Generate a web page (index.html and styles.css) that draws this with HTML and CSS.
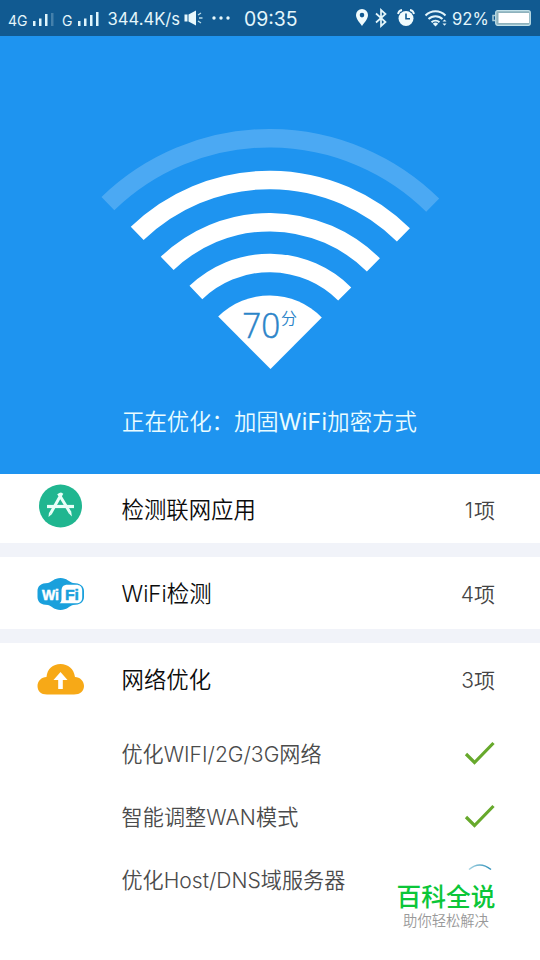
FILE: index.html
```html
<!DOCTYPE html>
<html lang="zh-CN">
<head>
<meta charset="utf-8">
<title>WiFi优化</title>
<link rel="stylesheet" href="styles.css">
</head>
<body>
<header class="status">
  <span class="net net-a">4G</span>
  <svg class="bars-a" width="23" height="16" viewBox="0 0 23 16" fill="#dff5fc"><path d="M1 9h2.500v5H1zM7 6.500h2.500V14H7zM13 2h2.500v12H13z"/><path d="M19 1h2.500v13H19z" opacity=".25"/></svg>
  <span class="net net-b">G</span>
  <svg class="bars-b" width="23" height="16" viewBox="0 0 23 16" fill="#dff5fc"><path d="M1 9h2.500v5H1zM7 6.500h2.500V14H7zM13 3h2.500v11H13zM19 0h2.500v14H19z"/></svg>
  <span class="speed">344.4K/s</span>
  <svg class="speaker" width="20" height="16" viewBox="0 0 20 16"><path d="M.5 4.500h3v7h-3zM4.500 4.500L12 .5v15l-7.500-4z" fill="#e8f8fc"/><path d="M14 5l3-2M15 8h3.500M14 11l3 2" stroke="#b9dce9" stroke-width="1.300"/></svg>
  <svg class="dots" width="20" height="6" viewBox="0 0 20 6" fill="#e8f8fc"><circle cx="3" cy="3" r="1.700"/><circle cx="10" cy="3" r="1.700"/><circle cx="17" cy="3" r="1.700"/></svg>
  <span class="time">09:35</span>
  <svg class="pin" width="14" height="20" viewBox="0 0 14 20"><path fill-rule="evenodd" d="M7 1a6 6 0 0 1 6 6c0 4-4 8-6 11-2-3-6-7-6-11a6 6 0 0 1 6-6zm0 3.800a2.300 2.300 0 1 0 0 4.600 2.300 2.300 0 0 0 0-4.600z" fill="#f0fbfd"/></svg>
  <svg class="bluetooth" width="12" height="20" viewBox="0 0 12 20"><path d="M1 5.500l9.500 8.500L6 18V2l4.500 4L1 14.500" fill="none" stroke="#e4f6fb" stroke-width="1.700"/></svg>
  <svg class="alarm" width="20" height="20" viewBox="0 0 20 20"><circle cx="10" cy="10.500" r="7.500" fill="#f0fbfd"/><path d="M2 6a5 5 0 0 1 4-4M14 2a5 5 0 0 1 4 4" fill="none" stroke="#f0fbfd" stroke-width="1.800"/><path d="M10 5.500v5.200h4" fill="none" stroke="#115a91" stroke-width="1.600"/></svg>
  <svg class="wlan" width="24" height="18" viewBox="0 0 24 18"><g fill="none" stroke="#e4f6fb" stroke-width="2"><path d="M1.500 6.500a14 14 0 0 1 20 0M4.500 10a10 10 0 0 1 14 0M7.500 13.300a6 6 0 0 1 8 0"/></g><path d="M8.800 14.700a4 4 0 0 1 5.400 0L11.500 17.500zM18.500 12.500l2-2 2 2zM18.500 14.500h4l-2 2.200z" fill="#e4f6fb"/></svg>
  <span class="percent">92%</span>
  <svg class="battery" width="40" height="18" viewBox="0 0 40 18"><path d="M3 6.500H1v5h2" fill="none" stroke="#a8cbd7" stroke-width="1.500"/><rect x="3.700" y="1.700" width="34.600" height="14.600" rx="2" fill="#8eb2bd" stroke="#c2e1e9" stroke-width="1.200"/><path d="M6.500 4h30.500v10H6.500z" fill="#fff"/></svg>
</header>

<section class="hero">
  <svg class="signal" width="340" height="244" viewBox="100 127 340 244">
    <g fill="none" stroke="#fff" stroke-width="18.500">
      <path d="M107.900 203.600a232.500 232.500 0 0 1 324.800 1.500" opacity=".2"/>
      <path d="M137.200 233.400a190.500 190.500 0 0 1 266.200 1.500"/>
      <path d="M167.200 263.400a147.500 147.500 0 0 1 206.200 1.500"/>
      <path d="M195.900 292.500a106.500 106.500 0 0 1 148.800 1.500"/>
    </g>
    <path d="M270.500 369l-52.300-52.600a73.500 73.500 0 0 1 103.600 1z" fill="#fff"/>
    <text class="score" x="242.300" y="338" textLength="38" lengthAdjust="spacingAndGlyphs">70</text>
    <text class="unit" x="281" y="323.500">分</text>
  </svg>
  <p class="progress">正在优化：加固<span>WiFi</span>加密方式</p>
</section>

<main>
  <section class="row row-apps">
    <svg class="icon" width="48" height="44" viewBox="0 0 48 44"><circle cx="24.500" cy="22" r="21.500" fill="#20b690"/><g fill="none" stroke="#e9fff8" stroke-width="3"><path d="M26 9L14.500 29.500M22.500 9.500L34 28.500"/><path d="M11 22.500h27" stroke-width="3.200"/></g><path d="M13 28.500l3 1.500-3.500 3zM32.500 29l2.700-1.600.7 5z" fill="#e9fff8"/></svg>
    <h2>检测联网应用</h2><span class="count count-one">1项</span>
  </section>
  <section class="row row-wifi">
    <svg class="icon" width="48" height="44" viewBox="0 0 48 44"><path d="M12 11c4-1 6-5 12.500-5S33 10 37 11c7 0 11 3 11 8v6c0 5-4 8-11 8-4 1-6 5-12.500 5S16 34 12 33C5 33 1.500 30 1.500 25v-6c0-5 3.500-8 10.500-8z" fill="#1aa0dc"/><path d="M31.500 12.800H40c4 0 6.200 2 6.200 6v6.400c0 4-2.200 6-6.200 6H23.500c2-1 2-3 2-6v-6.400c0-4 2-6 6-6z" fill="#fff"/><text class="logo logo-wi" x="6" y="27.500" textLength="17" lengthAdjust="spacingAndGlyphs">Wi</text><text class="logo logo-fi" x="29" y="27.500" textLength="14" lengthAdjust="spacingAndGlyphs">Fi</text></svg>
    <h2 class="h-wifi">WiFi检测</h2><span class="count">4项</span>
  </section>
  <section class="row row-net">
    <svg class="icon" width="48" height="44" viewBox="0 0 48 44"><path d="M11 36.500C5 36.500 1.500 33 1.500 28s4-9 9-9C11 11 17 6 24.500 6S38 11 39 19c5 0 9 4 9 9s-4 8.500-10 8.500z" fill="#f7a917"/><path d="M24.500 14l7 8h-4.700v9h-4.600v-9h-4.700z" fill="#fff"/></svg>
    <h2>网络优化</h2><span class="count">3项</span>
  </section>
  <ul class="tasks">
    <li><span>优化WIFI/2G/3G网络</span><svg width="32" height="26" viewBox="0 0 32 26"><path d="M2 14l8.500 8.500L29.500 3" fill="none" stroke="#67a92c" stroke-width="3.200"/></svg></li>
    <li><span class="wan">智能调整WAN模式</span><svg width="32" height="26" viewBox="0 0 32 26"><path d="M2 14l8.500 8.500L29.500 3" fill="none" stroke="#67a92c" stroke-width="3.200"/></svg></li>
    <li><span>优化Host/DNS域服务器</span><svg width="32" height="32" viewBox="0 0 32 32"><defs><linearGradient id="spin"><stop stop-color="#a5d3e2"/><stop offset="1" stop-color="#2b8eb7"/></linearGradient></defs><path d="M5 6.500Q15.500-2.500 27 6.500" fill="none" stroke="url(#spin)" stroke-width="1.500"/></svg></li>
  </ul>
</main>
<aside class="brand"><strong>百科全说</strong><span>助你轻松解决</span></aside>
</body>
</html>
```
FILE: styles.css
```css
* { box-sizing: border-box; }
body {
  margin: 0;
  width: 540px;
  height: 960px;
  overflow: hidden;
  position: relative;
  background: #fff;
  color: #0c0c0c;
  font-family: Inter, "Noto Sans CJK SC", sans-serif;
  font-weight: 350;
}
svg { display: block; flex: none; }
.status {
  height: 36px;
  display: flex;
  align-items: center;
  padding-left: 8px;
  background: #115a91;
  color: #e4f6fb;
  white-space: nowrap;
  font-weight: 400;
}
.status span { flex: none; line-height: 36px; }
.net { font-size: 14px; padding-top: 5px; }
.net-a { width: 24px; }
.net-b { width: 15px; }
.bars-a { margin-right: 7px; margin-top: 4px; }
.bars-b { margin-top: 4px; }
.speed { width: 77px; padding-left: 7.5px; font-size: 16.6px; padding-top: 1px; }
.speaker { margin-left: 7px; }
.dots { margin-left: 7px; }
.time { width: 112px; padding-left: 13px; font-size: 19.4px; padding-top: 2px; }
.pin { margin-left: 12px; }
.bluetooth { margin-left: 6px; }
.alarm { margin-left: 9px; }
.wlan { margin-left: 8px; }
.percent { width: 36px; margin-left: 4px; font-size: 16.6px; padding-top: 2px; }
.battery { margin-left: 4px; }
.hero {
  height: 438px;
  padding-top: 91px;
  background: #1e94f0;
}
.signal { margin: 0 auto; }
.score { font: 300 34px "Open Sans", sans-serif; fill: #2b84c8; stroke: #2b84c8; stroke-width: .5px; }
.unit { font: 350 16px "Noto Sans CJK SC", sans-serif; fill: #2b84c8; }
.progress {
  margin: 34px 0 0;
  padding-left: 122px;
  font-size: 22.4px;
  line-height: 34px;
  color: #eafcff;
  white-space: nowrap;
}
.progress span { letter-spacing: .3px; font-size: 23px; font-weight: 400; }
.row {
  display: flex;
  align-items: center;
  padding: 0 45px 0 36px;
}
.row-apps { height: 69px; }
.row-wifi { height: 86px; border-top: 14px solid #f1f3f9; }
.row-net { height: 86px; border-top: 14px solid #f1f3f9; }
.row-apps .icon { margin-top: -5px; }
.row h2 {
  flex: 1;
  margin: 2px 0 0 37.5px;
  font-size: 22.4px;
  font-weight: 350;
  line-height: 32px;
}
.row-wifi .icon, .row-net .icon { margin-top: 1px; }
.count { font-size: 21px; font-weight: 350; color: #444; }
.count-one { letter-spacing: 1px; margin-right: -1px; }
.logo { font: bold 15px "Liberation Sans", sans-serif; }
.logo-wi { fill: #fff; stroke: #fff; stroke-width: .5px; }
.logo-fi { fill: #1aa0dc; stroke: #1aa0dc; stroke-width: .5px; }
.tasks { list-style: none; margin: 6px 0 0; padding: 0 44px 0 121.5px; }
.tasks li {
  height: 63px;
  display: flex;
  align-items: center;
  justify-content: space-between;
  font-size: 21.1px;
  color: #4b4b4b;
  white-space: nowrap;
}
.wan { letter-spacing: .1px; }
.brand {
  position: absolute;
  left: 379px;
  top: 870px;
  width: 134px;
  height: 66px;
  padding-top: 7px;
  display: flex;
  flex-direction: column;
  align-items: center;
  background: #fff;
  font-family: "Noto Sans CJK SC", sans-serif;
}
.brand strong { font-size: 24.7px; line-height: 36px; font-weight: 500; color: #0bc638; }
.brand span { font-size: 14.3px; line-height: 14px; color: #999; }
```
